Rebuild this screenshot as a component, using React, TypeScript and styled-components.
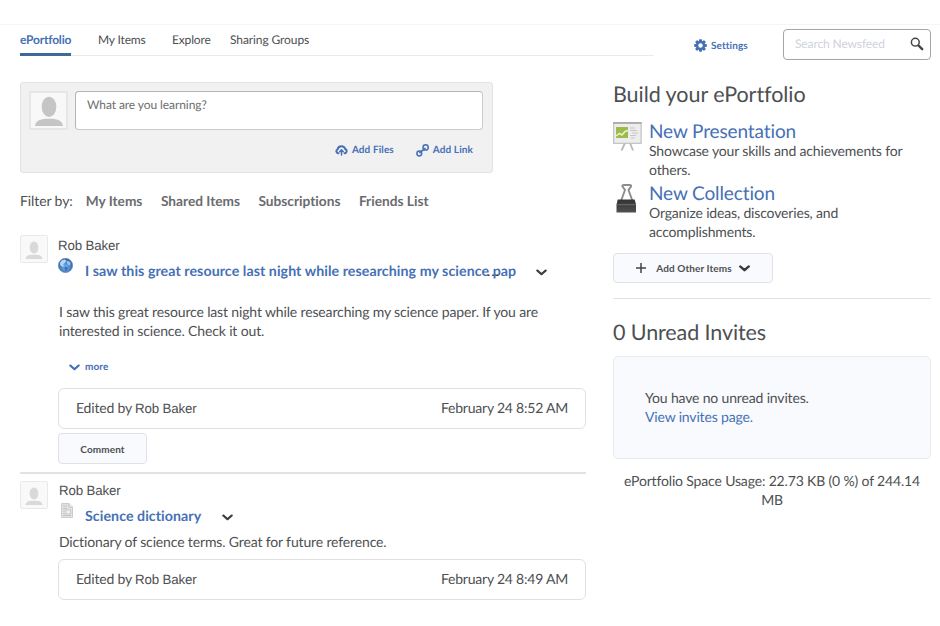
import React from "react";
import styled, { createGlobalStyle } from "styled-components";

const BLUE = "#4570b5";
const INK = "#4d4f52";

const GlobalStyle = createGlobalStyle`
  * { box-sizing: border-box; }
  body { margin: 0; background: #fff; color: ${INK}; font-family: Lato, "Liberation Sans", sans-serif; text-rendering: geometricPrecision; font-variant-ligatures: none; }
  svg { display: block; flex: none; }
`;

/* One line of text: size, line box, tracking and weight vary per use. */
const Text = styled.div<{ $size: number; $line: number; $track?: number; $bold?: boolean; $color?: string; $top?: number; $left?: number }>`
  font-size: ${(p) => p.$size}px;
  line-height: ${(p) => p.$line}px;
  letter-spacing: ${(p) => p.$track ?? 0}px;
  font-weight: ${(p) => (p.$bold ? 700 : 400)};
  color: ${(p) => p.$color ?? INK};
  margin-top: ${(p) => p.$top ?? 0}px;
  margin-left: ${(p) => p.$left ?? 0}px;
  white-space: nowrap;
`;

const Page = styled.div`
  width: 940px;
  height: 626px;
  padding: 24px 9px 0 20px;
  overflow: hidden;
`;

const Header = styled.header`
  display: flex;
  height: 37px;
  margin: 0 -9px 0 -20px;
  padding: 0 9px 0 20px;
  border-top: 1px solid #f5f5f5;
`;

const Nav = styled.nav`
  display: flex;
  width: 634px;
  height: 31px;
  border-bottom: 1px solid #ebebeb;
`;

const Tab = styled.a<{ $active?: boolean; $gap: number; $width: number; $track: number }>`
  width: ${(p) => p.$width}px;
  height: 31px;
  margin-right: ${(p) => p.$gap}px;
  padding-top: 6px;
  font-size: 12px;
  line-height: 17px;
  letter-spacing: ${(p) => p.$track}px;
  white-space: nowrap;
  color: ${(p) => (p.$active ? BLUE : INK)};
  font-weight: ${(p) => (p.$active ? 700 : 400)};
  border-bottom: ${(p) => (p.$active ? "3px solid #40689f" : "0")};
`;

const Settings = styled.a`
  display: flex;
  align-items: center;
  gap: 4px;
  width: 89px;
  height: 31px;
  margin: 5px 0 0 40px;
`;

const Search = styled.div`
  display: flex;
  align-items: center;
  justify-content: space-between;
  width: 148px;
  height: 31px;
  margin-top: 4px;
  padding: 0 6px 1px 11px;
  border: 1px solid #a3a5a8;
  border-radius: 4px;
  flex: none;
`;

const Columns = styled.div`
  display: grid;
  grid-template-columns: 566px 318px;
  column-gap: 27px;
`;

const Composer = styled.section`
  display: grid;
  grid-template-columns: 39px 408px;
  column-gap: 7px;
  align-content: start;
  width: 473px;
  height: 91px;
  margin-top: 21px;
  padding: 8px 0 0 8px;
  background: #f1f1f1;
  border: 1px solid #e3e3e3;
  border-radius: 3px;
`;

const Field = styled.div`
  height: 39px;
  padding: 5px 0 0 11px;
  background: #fff;
  border: 1px solid #cbcbcb;
  border-top-color: #b5b5b5;
  border-left-color: #b5b5b5;
  border-radius: 4px;
`;

const Actions = styled.div`
  grid-column: 2;
  display: flex;
  justify-content: flex-end;
  gap: 22px;
  margin-top: 12px;
  padding-right: 10px;
`;

const Action = styled.a`
  display: flex;
  align-items: center;
  gap: 4px;
`;

const AvatarFrame = styled.div<{ $size: number; $faint?: boolean }>`
  display: flex;
  align-items: flex-end;
  justify-content: center;
  width: ${(p) => p.$size}px;
  height: ${(p) => p.$size}px;
  padding-bottom: ${(p) => (p.$faint ? 3 : 2)}px;
  border: ${(p) => (p.$faint ? 1 : 2)}px solid #e6e6e6;
  border-radius: 2px;
  background: #f8f8f8;
  opacity: ${(p) => (p.$faint ? 0.85 : 1)};
`;

const Filters = styled.div`
  display: flex;
  height: 20px;
  margin-top: 18px;
`;

const Post = styled.article<{ $top: number }>`
  display: grid;
  grid-template-columns: 28px 528px;
  column-gap: 10px;
  margin-top: ${(p) => p.$top}px;
`;

const Name = styled.span<{ $size: number; $track?: number }>`
  font-family: "Liberation Sans", Arial, sans-serif;
  font-size: ${(p) => p.$size}px;
  letter-spacing: ${(p) => p.$track ?? 0}px;
`;

const TitleRow = styled.div`
  display: flex;
  height: 24px;
`;

const IconSlot = styled.div<{ $left?: number; $top?: number }>`
  width: ${(p) => 27 - (p.$left ?? 0)}px;
  margin: ${(p) => p.$top ?? 0}px 0 0 ${(p) => p.$left ?? 0}px;
  flex: none;
`;

const ChevronSlot = styled.div<{ $left: number; $top?: number }>`
  margin: ${(p) => p.$top ?? 0}px 0 0 ${(p) => p.$left}px;
`;

const Title = styled.div`
  position: relative;
  width: 431px;
`;

const Ellipsis = styled.span`
  position: absolute;
  left: 402px;
  top: 4px;
  color: #333;
  font-size: 14px;
  line-height: 20px;
  letter-spacing: 1px;
`;

const More = styled.a`
  display: flex;
  align-items: center;
  gap: 5px;
  height: 16px;
  margin: 19px 0 0 11px;
`;

const Card = styled.div<{ $top: number }>`
  display: flex;
  align-items: center;
  justify-content: space-between;
  height: 41px;
  margin-top: ${(p) => p.$top}px;
  padding: 0 17px 1px;
  border: 1px solid #e0e0e0;
  border-radius: 6px;
`;

const Button = styled.button<{ $width: number; $height: number; $top: number }>`
  display: flex;
  align-items: center;
  justify-content: center;
  width: ${(p) => p.$width}px;
  height: ${(p) => p.$height}px;
  margin: ${(p) => p.$top}px 0 0;
  padding: 0;
  background: #f9fafd;
  border: 1px solid #dfe2e6;
  border-radius: 4px;
  font-family: inherit;
`;

const Rule = styled.hr<{ $top: number; $weight: number }>`
  height: ${(p) => p.$weight}px;
  margin: ${(p) => p.$top}px 0 0;
  border: 0;
  background: #e2e2e2;
`;

const BuildItem = styled.div<{ $top: number }>`
  display: grid;
  grid-template-columns: 36px 1fr;
  height: 62px;
  margin-top: ${(p) => p.$top}px;
`;

const InviteBox = styled.div`
  height: 103px;
  margin-top: 10px;
  padding: 31px;
  background: #f9fafd;
  border: 1px solid #e8eaee;
  border-radius: 5px;
`;

const Usage = styled.div`
  display: flex;
  flex-direction: column;
  align-items: center;
  margin-top: 12px;
`;

const Person = ({ size, color }: { size: number; color: string }) => (
  <svg width={size} height={size} viewBox="0 0 32 32" fill={color}>
    <ellipse cx="16" cy="11.5" rx="7.8" ry="10.8" />
    <path d="M1 32c.5-4 3-6.200 7-7 3-.6 5-.7 8-.7s5 .1 8 .7c4 .8 6.500 3 7 7z" />
  </svg>
);

const Chevron = ({ w, color, stroke = 2 }: { w: number; color: string; stroke?: number }) => (
  <svg width={w} height={7} viewBox="0 0 10 7" fill="none" stroke={color} strokeWidth={stroke} strokeLinecap="round" strokeLinejoin="round" preserveAspectRatio="none">
    <path d="M1.200 1.500 5 5.200 8.800 1.500" />
  </svg>
);

const Gear = () => (
  <svg width="13" height="13" viewBox="-6.500 -6.500 13 13" fill={BLUE}>
    {[0, 45, 90, 135].map((a) => (
      <rect key={a} x="-1.500" y="-6.300" width="3" height="12.600" rx=".7" transform={`rotate(${a})`} />
    ))}
    <circle r="4.700" />
    <circle r="2.200" fill="#fff" />
  </svg>
);

const Magnifier = () => (
  <svg width="14" height="14" viewBox="0 0 14 14" fill="none" stroke="#444" strokeLinecap="round">
    <circle cx="5.300" cy="5.200" r="3.900" strokeWidth="1.500" />
    <path d="M8.500 8.500 12.200 12.200" strokeWidth="2.400" />
  </svg>
);

const CloudUp = () => (
  <svg width="13" height="11" viewBox="0 0 13 11" fill="none" stroke={BLUE} strokeWidth="2" strokeLinecap="round" strokeLinejoin="round">
    <path d="M3.400 8.200H3A2 2 0 0 1 2.600 4.400 3.900 3.900 0 0 1 10.200 4 2.200 2.200 0 0 1 10 8.200H9.600" />
    <path d="M6.500 10V5.300M4.700 6.700 6.500 4.900 8.300 6.700" strokeWidth="1.500" />
  </svg>
);

const LinkIcon = () => (
  <svg width="13" height="13" viewBox="0 0 13 13" fill="none" stroke={BLUE} strokeWidth="1.500">
    <circle cx="3.300" cy="9.500" r="2.400" />
    <circle cx="9.600" cy="3.400" r="2.600" />
    <path d="M3.800 8.800 6.200 6.300M6.600 6.700 9 4.200" strokeWidth="1.500" strokeLinecap="round" />
  </svg>
);

const Globe = () => (
  <svg width="15" height="15" viewBox="0 0 15 15">
    <defs>
      <radialGradient id="sea" cx=".5" cy=".6" r=".6">
        <stop offset="0" stopColor="#75b6ee" />
        <stop offset="1" stopColor="#2b5ba3" />
      </radialGradient>
    </defs>
    <circle cx="7.500" cy="7.500" r="7.200" fill="url(#sea)" stroke="#6484b4" strokeWidth=".5" />
    <path d="M2 4.500Q4 1.200 7 1.600L8.500 3 6.700 5 5.200 6.200 6 8 4.200 8.800 2.200 7z" fill="#b5d6f3" />
    <path d="M9.500 2.500 12.500 4.600 12 7.500 10 6.800 8.800 4.800z" fill="#9ac5ed" />
    <path d="M6.500 8.500 9.800 9.300 8.800 12 7.200 12.500z" fill="#376fb5" />
  </svg>
);

const DocIcon = () => (
  <svg width="12" height="15" viewBox="0 0 12 15">
    <path d="M.5.5H8L11.500 4V14.500H.5z" fill="#e2e2e2" stroke="#cdcdcd" />
    <path d="M8 .5V4H11.500" fill="#f5f5f5" stroke="#c2c2c2" />
    <path d="M2 3H6M2 5.500H6M2 8H4M2 10.500H4M2 12.500H10" stroke="#c4c4c4" />
    <rect x="5" y="7" width="4.500" height="4" fill="#f1f1f1" stroke="#bcbcbc" strokeWidth=".7" />
  </svg>
);

const Easel = () => (
  <svg width="29" height="30" viewBox="0 0 29 30">
    <path d="M12 21 8.500 28.500M17 21 20 28.500" stroke="#b9b9b9" strokeWidth="1.800" />
    <rect x=".7" y=".8" width="27.400" height="20.500" fill="#ededee" stroke="#bcbcbc" strokeWidth="1.100" />
    <path d="M0 1H28.500" stroke="#999" strokeWidth="1.300" />
    <rect x="3" y="5" width="12" height="11" fill="#9dbb48" />
    <path d="M3 14 6.500 11.500 9 13 12 9.500 15 8.500" fill="none" stroke="#e9f2ca" strokeWidth="1.500" />
    <path d="M17 6H22M17 8.500H24M19 11H25M17 13.500H23M18 16H22" stroke="#c7c7c9" strokeWidth="1.100" />
  </svg>
);

const Clip = () => (
  <svg width="22" height="31" viewBox="0 0 22 31">
    <defs>
      <linearGradient id="clip" x1="0" y1="0" x2="0" y2="1">
        <stop offset="0" stopColor="#333" />
        <stop offset="1" stopColor="#505050" />
      </linearGradient>
    </defs>
    <path d="M5 17 9 6 6.500 2.600Q5.800 1 8 1H13.500Q15.700 1 15 2.600L12.500 6 16.500 17" fill="none" stroke="#8c8c8c" strokeWidth="1.900" />
    <path d="M1.700 15.500H18.700L20 20.500V28.500H.5V20.500z" fill="url(#clip)" />
    <path d="M.8 20.700H19.700" stroke="#777" strokeWidth=".8" />
  </svg>
);

const Plus = () => (
  <svg width="10" height="10" viewBox="0 0 10 10" stroke="#444" strokeWidth="1.500">
    <path d="M5 0V10M0 5H10" />
  </svg>
);

const EditedCard = ({ top, date }: { top: number; date: string }) => (
  <Card $top={top}>
    <Text $size={14} $line={20} $track={-0.18}>Edited by <Name $size={13.3} $track={-0.15}>Rob Baker</Name></Text>
    <Text $size={14} $line={20} $track={-0.22}>{date}</Text>
  </Card>
);

export default function App() {
  return (
    <Page>
      <GlobalStyle />
      <Header>
        <Nav>
          <Tab $active $width={51} $gap={27} $track={-0.2}>ePortfolio</Tab>
          <Tab $width={47} $gap={27} $track={-0.16}>My Items</Tab>
          <Tab $width={38} $gap={20} $track={-0.16}>Explore</Tab>
          <Tab $width={79} $gap={0} $track={-0.1}>Sharing Groups</Tab>
        </Nav>
        <Settings>
          <Gear />
          <Text $size={10} $line={16} $track={0.1} $bold $color={BLUE}>Settings</Text>
        </Settings>
        <Search>
          <Text $size={12} $line={16} $track={-0.12} $color="#cfd2dc">Search Newsfeed</Text>
          <Magnifier />
        </Search>
      </Header>
      <Columns>
        <main>
          <Composer>
            <AvatarFrame $size={39}><Person size={30} color="#c5c5c5" /></AvatarFrame>
            <Field><Text $size={12} $line={16} $track={-0.08} $color="#6b6d70">What are you learning?</Text></Field>
            <Actions>
              <Action><CloudUp /><Text $size={10} $line={16} $track={0.1} $bold $color={BLUE}>Add Files</Text></Action>
              <Action><LinkIcon /><Text $size={10} $line={16} $track={0.1} $bold $color={BLUE}>Add Link</Text></Action>
            </Actions>
          </Composer>
          <Filters>
            <Text $size={14} $line={20} $track={-0.1}>Filter by:</Text>
            <Text $size={13.7} $line={20} $bold $color="#6a6c6f" $left={13}>My Items</Text>
            <Text $size={13.7} $line={20} $bold $color="#6a6c6f" $left={18.5}>Shared Items</Text>
            <Text $size={13.7} $line={20} $bold $color="#6a6c6f" $left={18.5}>Subscriptions</Text>
            <Text $size={13.7} $line={20} $bold $color="#6a6c6f" $left={18.5}>Friends List</Text>
          </Filters>
          <Post $top={24}>
            <AvatarFrame $size={28} $faint><Person size={18} color="#d3d3d3" /></AvatarFrame>
            <div>
              <Text $size={13.3} $line={22} $top={-1}><Name $size={13.3} $track={-0.15}>Rob Baker</Name></Text>
              <TitleRow>
                <IconSlot $top={1}><Globe /></IconSlot>
                <Title>
                  <Text $size={14.2} $line={20} $top={5} $track={0.07} $bold $color={BLUE}>I saw this great resource last night while researching my science pap</Text>
                  <Ellipsis>...</Ellipsis>
                </Title>
                <ChevronSlot $top={12} $left={20}><Chevron w={11} color="#3c3c3c" /></ChevronSlot>
              </TitleRow>
              <Text $size={14} $line={19} $top={21} $left={1} $track={-0.145}>I saw this great resource last night while researching my science paper. If you are</Text>
              <Text $size={14} $line={19} $left={1} $track={-0.145}>interested in science. Check it out.</Text>
              <More><Chevron w={11} color={BLUE} /><Text $size={10} $line={16} $track={0.1} $bold $color={BLUE}>more</Text></More>
              <EditedCard top={13} date="February 24 8:52 AM" />
              <Button $width={89} $height={31} $top={4}><Text as="span" $size={10} $line={16} $track={0.1} $bold>Comment</Text></Button>
            </div>
          </Post>
          <Rule $top={8} $weight={2} />
          <Post $top={7}>
            <AvatarFrame $size={28} $faint><Person size={18} color="#d3d3d3" /></AvatarFrame>
            <div>
              <Text $size={13.3} $line={22} $top={-2} $left={1}><Name $size={13.3} $track={-0.15}>Rob Baker</Name></Text>
              <TitleRow>
                <IconSlot $top={1} $left={3}><DocIcon /></IconSlot>
                <Text $size={14.2} $line={20} $top={4.5} $track={0.07} $bold $color={BLUE}>Science dictionary</Text>
                <ChevronSlot $top={12} $left={21}><Chevron w={11} color="#3c3c3c" /></ChevronSlot>
              </TitleRow>
              <Text $size={14} $line={20} $top={6} $left={1} $track={-0.145}>Dictionary of science terms. Great for future reference.</Text>
              <EditedCard top={7} date="February 24 8:49 AM" />
            </div>
          </Post>
        </main>
        <aside>
          <Text $size={21.5} $line={28} $top={19} $track={-0.05}>Build your ePortfolio</Text>
          <BuildItem $top={14}>
            <Easel />
            <div>
              <Text $size={19} $line={20} $track={-0.12} $color={BLUE}>New Presentation</Text>
              <Text $size={14} $line={19} $top={-1} $track={-0.16}>Showcase your skills and achievements for</Text>
              <Text $size={14} $line={19} $track={-0.16}>others.</Text>
            </div>
          </BuildItem>
          <BuildItem $top={0}>
            <IconSlot $left={3}><Clip /></IconSlot>
            <div>
              <Text $size={19} $line={20} $track={-0.12} $color={BLUE}>New Collection</Text>
              <Text $size={14} $line={19} $top={-1} $track={-0.16}>Organize ideas, discoveries, and</Text>
              <Text $size={14} $line={19} $track={-0.16}>accomplishments.</Text>
            </div>
          </BuildItem>
          <Button $width={160} $height={30} $top={7}>
            <Plus />
            <Text as="span" $size={10} $line={16} $track={0.1} $bold $left={10}>Add Other Items</Text>
            <ChevronSlot $top={1} $left={7}><Chevron w={11} color="#3c3c3c" stroke={2.4} /></ChevronSlot>
          </Button>
          <Rule $top={15} $weight={1} />
          <Text $size={21.5} $line={28} $top={19} $track={-0.1}>0 Unread Invites</Text>
          <InviteBox>
            <Text $size={14} $line={19} $track={-0.16}>You have no unread invites.</Text>
            <Text $size={14} $line={19} $track={-0.16} $color={BLUE}>View invites page.</Text>
          </InviteBox>
          <Usage>
            <Text $size={14} $line={19} $track={-0.16}>ePortfolio Space Usage: 22.73 KB (0 %) of 244.14</Text>
            <Text $size={14} $line={19} $track={-0.16}>MB</Text>
          </Usage>
        </aside>
      </Columns>
    </Page>
  );
}
